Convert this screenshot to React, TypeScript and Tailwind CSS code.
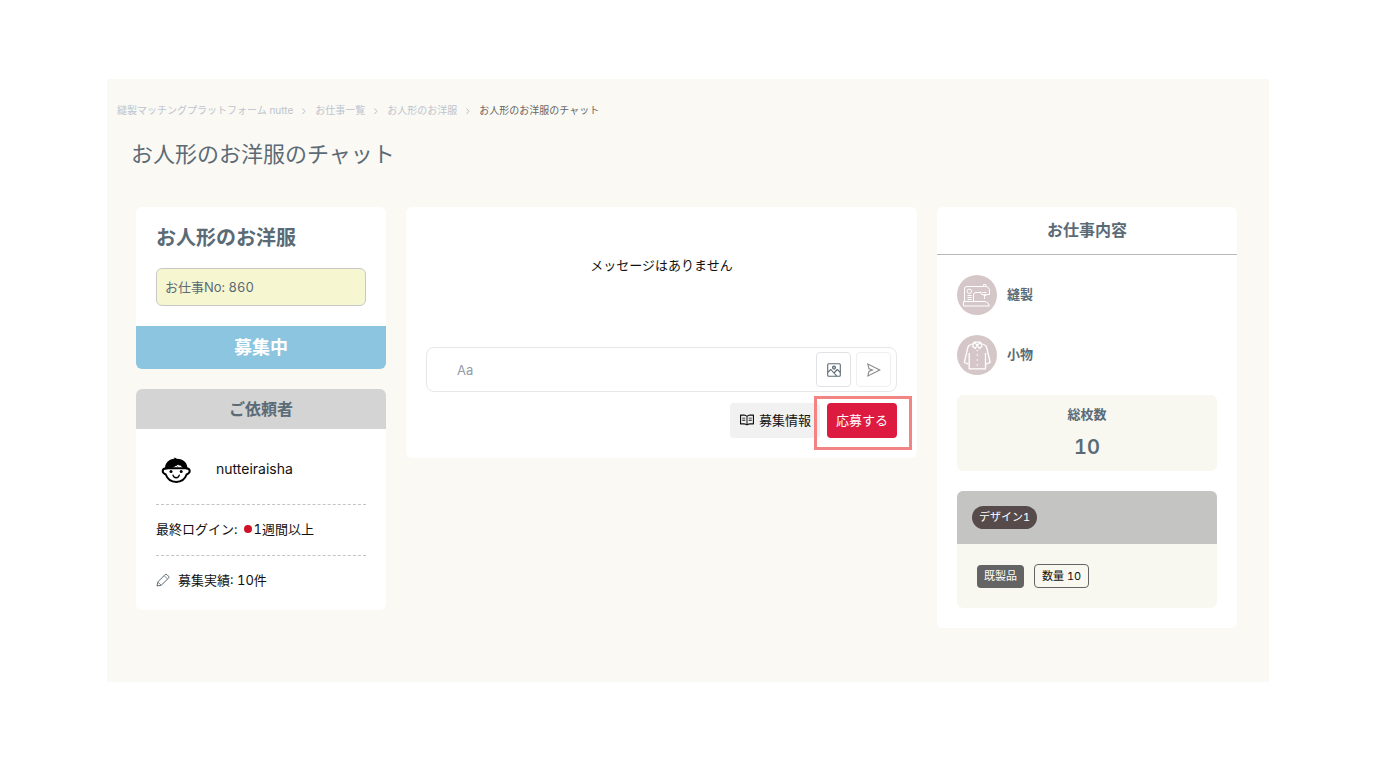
import type { ReactNode } from 'react'
import { AiOutlineRead, AiOutlineSend } from 'react-icons/ai'

const breadcrumbs = ['縫製マッチングプラットフォーム nutte', 'お仕事一覧', 'お人形のお洋服']

function ChevronIcon() {
  return (
    <svg viewBox="0 0 6 8" className="mt-0.5 h-2 w-1.5" fill="none" stroke="currentColor" aria-hidden="true">
      <path d="M1.5 1.5 4 4.2 1.5 7" />
    </svg>
  )
}

function FaceIcon() {
  return (
    <svg viewBox="0 0 40 40" className="size-10 shrink-0" aria-hidden="true">
      <path
        d="M9.5 19.200C5.800 20 5.600 24 9.800 25.500c1.600 4.600 5.600 7.400 10.400 7.400s8.800-2.800 10.400-7.400c4.200-1.500 4-5.500.3-6.300z"
        fill="#fff"
        stroke="#000"
        strokeWidth="2"
        strokeLinejoin="round"
      />
      <path d="M9 20.800C8.600 13.500 13 10.200 18.800 9.800c-.4-.6-.9-.8-1.300-.9 1.200-.4 2.600-.1 3.200.8 6.900.1 11.300 4.100 10.700 11.100-2.600-.8-5.400-2.500-7.400-4.500l-1.400-.6-1.500.2c-3.200 2.800-7.600 3.600-12.100 4.900z" />
      <path d="m19.800 15.600 1.800 2M22.300 15.400l1.200 1.500" stroke="#000" strokeWidth=".7" />
      <circle cx="15" cy="22.500" r="1.500" />
      <circle cx="25.200" cy="22.500" r="1.500" />
      <path d="M17 26.200c.6 3.400 5.700 3.400 6.300 0" fill="none" stroke="#000" strokeWidth="1.300" strokeLinecap="round" />
    </svg>
  )
}

function PencilIcon() {
  return (
    <svg
      viewBox="0 0 14 14"
      className="size-3.5 shrink-0 text-[#5b6b76]"
      fill="none"
      stroke="currentColor"
      strokeLinejoin="round"
      aria-hidden="true"
    >
      <path d="M1 13 1.900 8.900 9.100 1.600Q10 .8 10.900 1.600L12.600 3.300Q13.400 4.200 12.600 5.100L5.300 12.200Z" />
      <path d="m2 9.200 3 2.800M8.300 2.800l3 3" strokeWidth=".8" />
    </svg>
  )
}

function ImageIcon() {
  return (
    <svg
      viewBox="0 0 14 14"
      className="size-3.5 text-[#5b6b76]"
      fill="none"
      stroke="currentColor"
      strokeWidth="1.100"
      strokeLinejoin="round"
      aria-hidden="true"
    >
      <rect x=".7" y=".7" width="12.600" height="12.600" rx="1" />
      <circle cx="7" cy="4.600" r="1.500" fill="currentColor" fillOpacity=".4" />
      <path d="m.8 9.300 3-2.800 6 6.600M7 10l3.300-3.500 3 2.800" />
    </svg>
  )
}

function SewingIcon() {
  return (
    <svg viewBox="0 0 40 40" className="size-10 shrink-0" fill="none" stroke="#fff" strokeLinejoin="round" aria-hidden="true">
      <circle cx="20" cy="20" r="20" fill="#d5c7c8" stroke="none" />
      <path d="M6.500 26.500h21.500q3.500.5 4.500 4.500H6.500z" />
      <path d="M7.500 26.500V14q0-2.500 2.500-2.500h18.500q4 0 4 4.500v3.500h-3M16.500 26v-6q0-2.500 2.500-2.500h5" />
      <path d="M26.500 11.500V9.500h2.500v2M23.500 16.500l1 3h5M25 17.500h4.500M26.500 20.500h3M27.500 20.500v3.500" strokeWidth=".9" />
      <circle cx="12.300" cy="16.300" r="2.200" />
      <path d="M10.500 20.500h4M10.500 22.500h4M10.500 24.500h4" />
    </svg>
  )
}

function ClothesIcon() {
  return (
    <svg viewBox="0 0 40 40" className="size-10 shrink-0" fill="none" stroke="#fff" strokeLinejoin="round" aria-hidden="true">
      <circle cx="20" cy="20" r="20" fill="#d5c7c8" stroke="none" />
      <path d="M16.500 8.500C12 10 11 10.500 10.500 14L7.300 27.500l4.200 1.600M24 8.500c4.500 1.500 5.500 2 6 5.500l3.200 13.500-4.200 1.600" strokeWidth="1.300" />
      <path d="M12.200 18v15.800h16.300V18" strokeWidth="1.300" />
      <path d="M17 7.200h6.500l1.500 4-2.700 2.300-2-3.300-2 3.300-2.700-2.300zM17.500 7.500l2.800 2.700 2.800-2.700" strokeWidth="1.200" />
      <g fill="#fff" stroke="none">
        <circle cx="20.300" cy="15.500" r=".8" />
        <circle cx="20.300" cy="20" r=".8" />
        <circle cx="20.300" cy="25" r=".8" />
        <circle cx="20.300" cy="30" r=".8" />
      </g>
    </svg>
  )
}

function Category({ icon, label }: { icon: ReactNode; label: string }) {
  return (
    <li className="flex items-center gap-2.5 text-[13px] font-bold text-[#5b6b76]">
      {icon}
      {label}
    </li>
  )
}

function JobSummary() {
  return (
    <section className="overflow-hidden rounded-md bg-white text-[#5b6b76]">
      <div className="p-5">
        <h2 className="text-xl leading-[23px] font-bold">お人形のお洋服</h2>
        <p className="mt-[18px] rounded-md border border-[#c8c8c8] bg-[#f6f6d0] px-2 py-2 text-[13px] leading-5">
          お仕事No: 860
        </p>
      </div>
      <p className="bg-[#8cc5df] py-2 text-center text-lg leading-[27px] font-bold text-white">募集中</p>
    </section>
  )
}

function ClientCard() {
  return (
    <section className="overflow-hidden rounded-md bg-white text-[13px] leading-5">
      <h2 className="bg-[#d4d4d4] py-2.5 text-center text-base leading-5 font-bold text-[#5b6b76]">ご依頼者</h2>
      <div className="p-5">
        <div className="flex items-center gap-5 border-b border-dashed border-[#c4c4c4] pb-[15px]">
          <FaceIcon />
          <span className="text-sm">nutteiraisha</span>
        </div>
        <p className="flex items-center border-b border-dashed border-[#c4c4c4] pt-3.5 pb-4">
          最終ログイン:
          <span className="mr-0.5 ml-1.5 size-2 rounded-full bg-[#ce1126]" />
          1週間以上
        </p>
        <p className="flex items-center gap-2 pt-3.5">
          <PencilIcon />
          募集実績: 10件
        </p>
      </div>
    </section>
  )
}

function ChatPanel() {
  return (
    <main className="min-w-0 flex-1 rounded-md bg-white p-5">
      <p className="pt-7 pb-[72px] text-center text-[13px] leading-5">メッセージはありません</p>
      <form className="flex items-center gap-[5px] rounded-lg border border-[#e5e7eb] px-[5px] py-1">
        <input
          type="text"
          aria-label="メッセージ"
          placeholder="Aa"
          className="min-w-0 flex-1 px-[25px] text-[13px] leading-5 outline-none placeholder:text-[#949ca9]"
        />
        <button
          type="button"
          aria-label="画像を添付"
          className="flex size-[35px] items-center justify-center rounded border border-[#e0e2e6]"
        >
          <ImageIcon />
        </button>
        <button
          type="button"
          aria-label="送信"
          className="flex size-[35px] items-center justify-center rounded border border-[#efefef] text-[#8c8c8c]"
        >
          <AiOutlineSend className="size-4" />
        </button>
      </form>
      <div className="mt-[11px] flex justify-end gap-[7px] text-[13px] leading-5">
        <button type="button" className="flex h-[35px] items-center gap-1 rounded bg-[#f1f1f1] px-[9px] pb-0.5">
          <AiOutlineRead className="size-4" />
          募集情報
        </button>
        <div className="relative">
          <button type="button" className="h-[35px] rounded bg-[#dd1a40] px-[9px] pb-0.5 text-white">
            応募する
          </button>
          <span className="pointer-events-none absolute -top-[7px] -right-[15px] -bottom-3 -left-[13px] border-3 border-[#f28484]" />
        </div>
      </div>
    </main>
  )
}

function JobDetails() {
  return (
    <aside className="w-[300px] shrink-0 rounded-md bg-white">
      <h2 className="border-b border-[#b8b8b8] pt-[13px] pb-3.5 text-center text-base leading-5 font-bold text-[#5b6b76]">
        お仕事内容
      </h2>
      <div className="flex flex-col gap-5 p-5">
        <ul className="flex flex-col gap-5">
          <Category icon={<SewingIcon />} label="縫製" />
          <Category icon={<ClothesIcon />} label="小物" />
        </ul>
        <div className="rounded-md bg-[#f9f8f0] py-[9px] text-center font-bold text-[#5b6b76]">
          <p className="text-[13px] leading-5">総枚数</p>
          <p className="mt-2 text-xl leading-[30px] font-semibold">10</p>
        </div>
        <div className="overflow-hidden rounded-md bg-[#f9f8f0]">
          <div className="flex bg-[#c4c4c2] p-[15px]">
            <span className="rounded-full bg-[#564a4a] px-[7px] text-[11px] leading-[23px] text-white">デザイン1</span>
          </div>
          <div className="flex items-center gap-2.5 p-5 text-[11px]">
            <span className="rounded bg-[#646464] px-[7px] leading-[23px] text-white">既製品</span>
            <span className="rounded border border-[#646464] px-[7px] leading-[22px]">数量 10</span>
          </div>
        </div>
      </div>
    </aside>
  )
}

export default function App() {
  return (
    <div className="min-h-screen bg-white px-[107px] py-[79px] font-[Inter,'Noto_Sans_CJK_JP',sans-serif] text-[#111] tabular-nums">
      <div className="bg-[#faf9f4] pt-[21px] pb-[54px]">
        <nav aria-label="パンくずリスト" className="pl-2.5">
          <ol className="flex items-center text-[10px] leading-5 text-[#bcc4cf]">
            {breadcrumbs.map((label) => (
              <li key={label} className="flex items-center">
                <a href="#">{label}</a>
                <span className="mx-2">
                  <ChevronIcon />
                </span>
              </li>
            ))}
            <li aria-current="page" className="text-[#666]">
              お人形のお洋服のチャット
            </li>
          </ol>
        </nav>
        <h1 className="mt-[18px] pl-6 text-[22px] leading-8 text-[#5b6b76]">お人形のお洋服のチャット</h1>
        <div className="mt-[37px] flex items-start gap-5 pr-8 pl-[29px]">
          <div className="flex w-[250px] shrink-0 flex-col gap-5">
            <JobSummary />
            <ClientCard />
          </div>
          <ChatPanel />
          <JobDetails />
        </div>
      </div>
    </div>
  )
}
